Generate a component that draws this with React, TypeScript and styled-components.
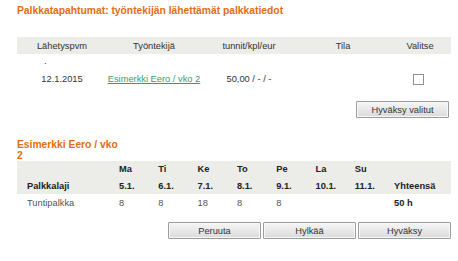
import styled, { createGlobalStyle } from "styled-components";

const GlobalStyle = createGlobalStyle`
  body {
    margin: 0;
    background: #ffffff;
    font-family: "Liberation Sans", Arial, sans-serif;
    color: #333333;
  }
`;

const Page = styled.div`
  padding: 5px 7px 0 17px;
  font-size: 9.3px;
`;

const SectionTitle = styled.h2<{ $width?: number }>`
  margin: 0;
  font-size: 10.3px;
  line-height: 12px;
  font-weight: bold;
  color: #e06d14;
  width: ${(p) => (p.$width ? `${p.$width}px` : "auto")};
`;

const SubTitle = styled(SectionTitle)`
  line-height: 11px;
`;

const Table = styled.table`
  width: 434px;
  border-collapse: collapse;
  table-layout: fixed;
`;

const HeadRow = styled.tr<{ $h: number }>`
  background: #ecece8;
  height: ${(p) => p.$h}px;
`;

const Row = styled.tr<{ $h: number }>`
  height: ${(p) => p.$h}px;
`;

const Th = styled.th<{ $align?: string }>`
  font-weight: normal;
  padding: 0;
  text-align: ${(p) => p.$align || "center"};
  color: #333;
`;

const Td = styled.td<{ $align?: string }>`
  padding: 0;
  text-align: ${(p) => p.$align || "center"};
  color: #333;
`;

const Dot = styled.span`
  display: inline-block;
  margin-left: 27px;
  line-height: 8px;
  vertical-align: top;
`;

const Link = styled.a`
  color: #3d9c64;
  text-decoration: underline;
`;

const Checkbox = styled.span`
  display: inline-block;
  width: 9px;
  height: 9px;
  border: 1px solid #8f8f8f;
  background: #fff;
  vertical-align: middle;
  margin-left: -3px;
`;

const Actions = styled.div<{ $top: number }>`
  display: flex;
  justify-content: flex-end;
  gap: 2px;
  margin-top: ${(p) => p.$top}px;
`;

const Button = styled.button`
  width: 93px;
  height: 17px;
  padding: 0;
  font-family: inherit;
  font-size: 9.3px;
  color: #333;
  border: 1px solid #9c9c9c;
  border-radius: 1px;
  background: linear-gradient(#f6f6f6, #dadada);
  box-shadow: inset 0 0 0 1px #f8f8f8;
`;

const Wk = styled.table`
  width: 434px;
  border-collapse: collapse;
  table-layout: fixed;
  margin-top: 0;
`;

const WkTh = styled.th<{ $pl?: number }>`
  padding: 0 0 0 ${(p) => p.$pl ?? 0}px;
  text-align: left;
  font-weight: bold;
  color: #222;
`;

const WkTd = styled.td<{ $pl?: number; $bold?: boolean }>`
  padding: 0 0 0 ${(p) => p.$pl ?? 0}px;
  text-align: left;
  font-weight: ${(p) => (p.$bold ? "bold" : "normal")};
  color: ${(p) => (p.$bold ? "#222" : "#555")};
`;

const days = [
  ["Ma", "5.1.", "8"],
  ["Ti", "6.1.", "8"],
  ["Ke", "7.1.", "18"],
  ["To", "8.1.", "8"],
  ["Pe", "9.1.", "8"],
  ["La", "10.1.", ""],
  ["Su", "11.1.", ""],
];

export default function App() {
  return (
    <Page>
      <GlobalStyle />
      <SectionTitle>Palkkatapahtumat: työntekijän lähettämät palkkatiedot</SectionTitle>

      <Table style={{ marginTop: 20 }}>
        <colgroup>
          <col style={{ width: 90 }} />
          <col style={{ width: 94 }} />
          <col style={{ width: 96 }} />
          <col style={{ width: 92 }} />
          <col style={{ width: 62 }} />
        </colgroup>
        <thead>
          <HeadRow $h={17}>
            <Th>Lähetyspvm</Th>
            <Th>Työntekijä</Th>
            <Th>tunnit/kpl/eur</Th>
            <Th>Tila</Th>
            <Th>Valitse</Th>
          </HeadRow>
        </thead>
        <tbody>
          <Row $h={16}>
            <Td $align="left">
              <Dot>.</Dot>
            </Td>
            <Td />
            <Td />
            <Td />
            <Td />
          </Row>
          <Row $h={18}>
            <Td>12.1.2015</Td>
            <Td>
              <Link href="#">Esimerkki Eero / vko 2</Link>
            </Td>
            <Td>50,00 / - / -</Td>
            <Td />
            <Td>
              <Checkbox />
            </Td>
          </Row>
        </tbody>
      </Table>

      <Actions $top={13}>
        <Button style={{ marginRight: 2 }}>Hyväksy valitut</Button>
      </Actions>

      <SubTitle $width={102} style={{ marginTop: 21 }}>
        Esimerkki Eero / vko 2
      </SubTitle>

      <Wk>
        <colgroup>
          <col style={{ width: 102 }} />
          {days.map((d) => (
            <col key={d[0]} style={{ width: 39.3 }} />
          ))}
          <col />
        </colgroup>
        <thead>
          <HeadRow $h={16}>
            <WkTh />
            {days.map((d) => (
              <WkTh key={d[0]}>{d[0]}</WkTh>
            ))}
            <WkTh />
          </HeadRow>
          <HeadRow $h={17}>
            <WkTh $pl={10}>Palkkalaji</WkTh>
            {days.map((d) => (
              <WkTh key={d[0]}>{d[1]}</WkTh>
            ))}
            <WkTh>Yhteensä</WkTh>
          </HeadRow>
        </thead>
        <tbody>
          <Row $h={17}>
            <WkTd $pl={10}>Tuntipalkka</WkTd>
            {days.map((d) => (
              <WkTd key={d[0]}>{d[2]}</WkTd>
            ))}
            <WkTd $bold>50 h</WkTd>
          </Row>
        </tbody>
      </Wk>

      <Actions $top={11}>
        <Button>Peruuta</Button>
        <Button>Hylkää</Button>
        <Button>Hyväksy</Button>
      </Actions>
    </Page>
  );
}
